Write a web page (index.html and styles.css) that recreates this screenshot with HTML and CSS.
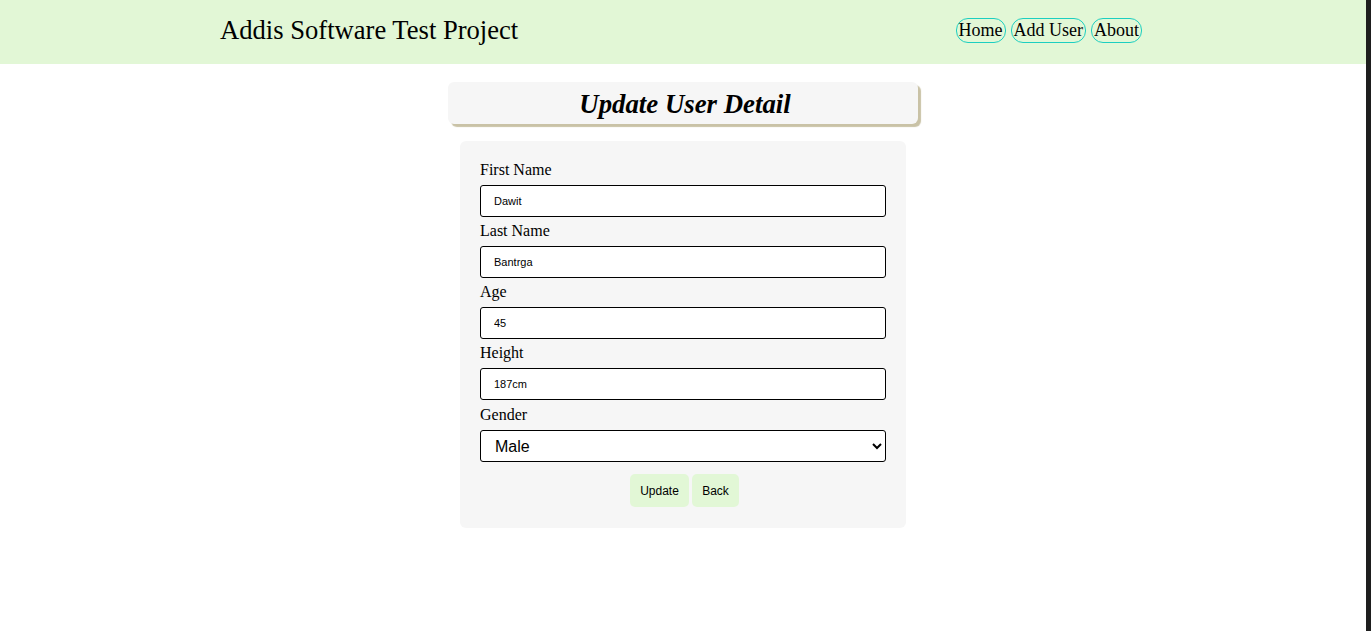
FILE: index.html
```html
<!DOCTYPE html>
<html lang="en">
<head>
<meta charset="utf-8">
<title>Addis Software Test Project</title>
<link rel="stylesheet" href="styles.css">
</head>
<body>
<div class="frame">
  <div class="page">
    <header class="topbar">
      <div class="topbar-inner">
        <h1 class="brand">Addis Software Test Project</h1>
        <nav class="nav">
          <a class="nav-link" href="#">Home</a>
          <a class="nav-link" href="#">Add User</a>
          <a class="nav-link" href="#">About</a>
        </nav>
      </div>
    </header>
    <main class="content">
      <h2 class="page-title">Update User Detail</h2>
      <form class="card">
        <label class="field-label" for="fn">First Name</label>
        <input class="field-input" id="fn" type="text" value="Dawit">
        <label class="field-label" for="ln">Last Name</label>
        <input class="field-input" id="ln" type="text" value="Bantrga">
        <label class="field-label" for="age">Age</label>
        <input class="field-input" id="age" type="text" value="45">
        <label class="field-label" for="ht">Height</label>
        <input class="field-input" id="ht" type="text" value="187cm">
        <label class="field-label field-label-last" for="gd">Gender</label>
        <select class="field-select" id="gd">
          <option selected>Male</option>
          <option>Female</option>
        </select>
        <div class="actions">
          <button class="btn btn-update" type="button">Update</button>
          <button class="btn btn-back" type="button">Back</button>
        </div>
      </form>
    </main>
  </div>
  <div class="scrollbar"></div>
</div>
</body>
</html>
```

FILE: styles.css
```css
html, body {
  margin: 0;
  padding: 0;
  height: 100%;
}
body {
  font-family: "Liberation Serif", "Times New Roman", serif;
  color: #000;
  background: #fff;
}
.frame {
  display: flex;
  min-height: 100%;
}
.page {
  flex: 1;
  min-width: 0;
}
.scrollbar {
  width: 5px;
  background: #1e1e1e;
}
.topbar {
  background: #e2f7d6;
  height: 64px;
}
.topbar-inner {
  box-sizing: border-box;
  height: 100%;
  padding: 0 224px 4px 220px;
  display: flex;
  align-items: center;
  justify-content: space-between;
}
.brand {
  margin: 0;
  font-weight: normal;
  font-size: 26.6px;
  line-height: 30px;
}
.nav {
  display: flex;
  gap: 5px;
}
.nav-link {
  font-size: 18px;
  line-height: 21px;
  color: #000;
  text-decoration: none;
  border: 1px solid #1ccfc0;
  border-radius: 12px;
  padding: 1px 2px;
}
.content {
  display: flex;
  flex-direction: column;
  align-items: center;
  padding-top: 18px;
}
.page-title {
  box-sizing: border-box;
  width: 470px;
  height: 42px;
  margin: 0;
  padding-left: 4px;
  background: #f6f6f6;
  border-radius: 6px;
  box-shadow: 3px 3px 1px #c9c2a6;
  font-size: 26.8px;
  font-style: italic;
  font-weight: bold;
  line-height: 44px;
  text-align: center;
}
.card {
  box-sizing: border-box;
  width: 446px;
  margin-top: 17px;
  padding: 18px 20px 21px;
  background: #f6f6f6;
  border-radius: 6px;
  display: flex;
  flex-direction: column;
}
.field-label {
  font-size: 16px;
  line-height: 22px;
  margin-bottom: 4px;
}
.field-label-last {
  margin-top: 1px;
}
.field-input,
.field-select {
  box-sizing: border-box;
  width: 406px;
  height: 32px;
  margin: 0 0 3px;
  border: 1px solid #000;
  border-radius: 3px;
  background: #fff;
  color: #000;
  font-family: "Liberation Sans", Arial, sans-serif;
}
.field-input {
  font-size: 11px;
  padding: 0 13px;
}
.field-select {
  font-size: 16px;
  padding: 0 10px;
  margin-bottom: 12px;
}
.actions {
  display: flex;
  justify-content: center;
  gap: 3px;
  padding-left: 3px;
}
.btn {
  height: 33px;
  padding: 1px 0 0;
  border: none;
  border-radius: 5px;
  background: #e2f7d6;
  color: #000;
  font-family: "Liberation Sans", Arial, sans-serif;
  font-size: 12px;
}
.btn-update {
  width: 59px;
}
.btn-back {
  width: 47px;
}
```
